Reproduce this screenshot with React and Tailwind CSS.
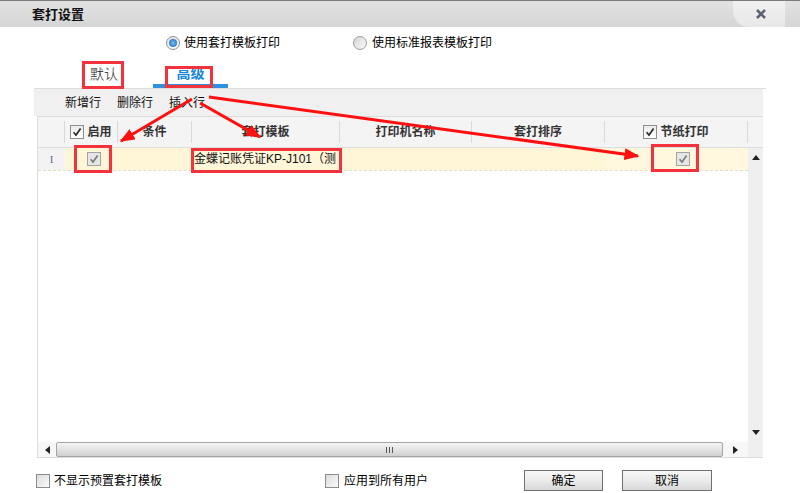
import React from "react";

const Check = ({ color = "#333", size = 10 }) => (
  <svg width={size} height={size} viewBox="0 0 10 10">
    <path d="M1.6 5.2 L4 8 L8.6 1.4" fill="none" stroke={color} strokeWidth="1.7" />
  </svg>
);

function HeaderCheckbox() {
  return (
    <span className="w-[14px] h-[14px] border border-[#8e8e8e] bg-linear-to-b from-[#ececec] to-[#ffffff] flex items-center justify-center shrink-0">
      <Check color="#2d2d2d" />
    </span>
  );
}

function RowCheckbox() {
  return (
    <span className="w-[14px] h-[14px] border border-[#a3a3a3] bg-[#e6e6e6] flex items-center justify-center shrink-0">
      <Check color="#7c7c7c" />
    </span>
  );
}

function EmptyCheckbox() {
  return (
    <span className="w-[14px] h-[14px] border border-[#8c8c8c] bg-linear-to-br from-[#dcdcdc] to-[#fbfbfb] shrink-0" />
  );
}

function HCell({ w, children, sep = true }) {
  return (
    <div className={`flex items-center h-full shrink-0 ${w}`}>
      <div className="flex-1 flex items-center justify-center gap-[3px]">{children}</div>
      {sep && <div className="w-px h-[22px] bg-[#d9d9d9]" />}
    </div>
  );
}

export default function App() {
  return (
    <div className="w-[800px] h-[493px] bg-white relative overflow-hidden text-[12px] leading-none text-black font-['Liberation_Sans','Noto_Sans_CJK_SC',sans-serif]">
      {/* Title bar */}
      <div className="h-[27px] border-t border-[#7a7a7a] bg-linear-to-b from-[#e2e2e2] to-[#d6d6d6] flex items-center">
        <div className="pl-[32px] text-[13px] font-bold text-[#111]">套打设置</div>
        <div className="ml-auto mr-[15px] w-[52px] h-full bg-linear-to-b from-[#f0f0f0] to-[#e8e8e8] rounded-bl-[16px] flex items-center justify-center">
          <svg width="10" height="10" viewBox="0 0 10 10" className="ml-[4px]">
            <path d="M1 1 L9 9 M9 1 L1 9" stroke="#5b6170" strokeWidth="2.6" />
          </svg>
        </div>
      </div>

      {/* Radio row */}
      <div className="h-[31px] flex items-center pl-[166px]">
        <span className="w-[14px] h-[14px] rounded-full border border-[#8d8d8d] bg-linear-to-b from-[#e4e4e4] to-[#fafafa] flex items-center justify-center">
          <span className="w-[8px] h-[8px] rounded-full bg-radial from-[#6fc0f5] to-[#1c64ab]" />
        </span>
        <span className="ml-[4px]">使用套打模板打印</span>
        <span className="ml-[73px] w-[14px] h-[14px] rounded-full border border-[#9a9a9a] bg-linear-to-br from-[#d6d6d6] to-[#fbfbfb]" />
        <span className="ml-[5px]">使用标准报表模板打印</span>
      </div>

      {/* Tabs row */}
      <div className="ml-[34px] w-[732px] h-[31px] border-b border-[#dcdcdc] flex items-end">
        <div className="ml-[56px] h-full flex items-center pt-[2px] text-[14px] font-light text-[#222]">默认</div>
        <div className="ml-[35px] w-[75px] h-full flex flex-col justify-end">
          <div className="flex-1 flex items-center justify-center pt-[4px] text-[14px] font-bold text-[#1a86d8]">高级</div>
          <div className="h-[4px] bg-[#2f90e0]" />
        </div>
      </div>

      {/* Toolbar */}
      <div className="ml-[34px] w-[729px] h-[27px] bg-[#f0f0f0] flex items-center pl-[31px] gap-[16px] text-[12px] text-[#111]">
        <span>新增行</span>
        <span>删除行</span>
        <span>插入行</span>
      </div>

      {/* Grid */}
      <div className="ml-[37px] w-[726px] h-[342px] border-t border-[#dcdcdc] border-l border-b flex flex-col">
        {/* header */}
        <div className="h-[31px] bg-[#f4f4f4] border-b border-[#dedede] flex text-[12px] font-bold text-[#333]">
          <HCell w="w-[27px]" />
          <HCell w="w-[53px]">
            <HeaderCheckbox />
            <span>启用</span>
          </HCell>
          <HCell w="w-[74px]">条件</HCell>
          <HCell w="w-[148px]">套打模板</HCell>
          <HCell w="w-[132px]">打印机名称</HCell>
          <HCell w="w-[133px]">套打排序</HCell>
          <HCell w="w-[143px]">
            <HeaderCheckbox />
            <span>节纸打印</span>
          </HCell>
          <div className="w-[15px]" />
        </div>

        {/* body */}
        <div className="flex-1 flex">
          <div className="w-[710px] flex flex-col">
            <div className="h-[23px] flex border-b border-dashed border-[#e6ddc0]">
              <div className="w-[27px] bg-[#f3f3f3] flex items-center justify-center text-[11px] text-[#6b6b96] font-['Liberation_Serif',serif]">I</div>
              <div className="flex-1 bg-[#fff6d8] flex">
                <div className="w-[53px] flex items-center justify-center pl-[4px]">
                  <RowCheckbox />
                </div>
                <div className="w-[74px]" />
                <div className="w-[148px] flex items-center whitespace-nowrap pl-[2px] text-[12px] text-[#111]">
                  金蝶记账凭证KP-J101（测
                </div>
                <div className="w-[132px]" />
                <div className="w-[133px]" />
                <div className="w-[143px] bg-[#fff8de] flex items-center justify-center pl-[13px]">
                  <RowCheckbox />
                </div>
              </div>
            </div>
            <div className="flex-1" />
          </div>
          {/* vertical scrollbar */}
          <div className="w-[15px] bg-[#efefef] flex flex-col items-center justify-between py-[7px]">
            <svg width="8" height="5" viewBox="0 0 8 5">
              <path d="M0 5 L4 0 L8 5 z" fill="#222" />
            </svg>
            <svg width="8" height="5" viewBox="0 0 8 5">
              <path d="M0 0 L4 5 L8 0 z" fill="#222" />
            </svg>
          </div>
        </div>

        {/* horizontal scrollbar */}
        <div className="h-[15px] flex bg-[#f7f7f7]">
          <div className="w-[18px] flex items-center justify-center">
            <svg width="5" height="8" viewBox="0 0 5 8">
              <path d="M5 0 L0 4 L5 8 z" fill="#222" />
            </svg>
          </div>
          <div className="w-[667px] h-full border border-[#a5a5a5] rounded-[2px] bg-linear-to-b from-[#f4f4f4] via-[#e4e4e4] to-[#cfcfcf] flex items-center justify-center">
            <div className="flex gap-[2px]">
              <span className="w-px h-[6px] bg-[#555]" />
              <span className="w-px h-[6px] bg-[#555]" />
              <span className="w-px h-[6px] bg-[#555]" />
            </div>
          </div>
          <div className="w-[25px] flex items-center justify-center">
            <svg width="5" height="8" viewBox="0 0 5 8">
              <path d="M0 0 L5 4 L0 8 z" fill="#222" />
            </svg>
          </div>
          <div className="w-[15px] bg-[#efefef]" />
        </div>
      </div>

      {/* Bottom row */}
      <div className="h-[35px] flex items-start pt-[12px] pl-[36px]">
        <div className="w-[289px] h-[21px] flex items-center">
          <EmptyCheckbox />
          <span className="ml-[4px]">不显示预置套打模板</span>
        </div>
        <div className="w-[199px] h-[21px] flex items-center">
          <EmptyCheckbox />
          <span className="ml-[5px]">应用到所有用户</span>
        </div>
        <button className="w-[79px] h-[21px] border border-[#707070] bg-linear-to-b from-[#f6f6f6] via-[#ebebeb] to-[#d8d8d8] text-[12px] flex items-center justify-center">
          确定
        </button>
        <button className="ml-[19px] w-[90px] h-[21px] border border-[#707070] bg-linear-to-b from-[#f6f6f6] via-[#ebebeb] to-[#d8d8d8] text-[12px] flex items-center justify-center">
          取消
        </button>
      </div>

      {/* Annotation overlay */}
      <svg className="absolute inset-0 pointer-events-none" width="800" height="493" viewBox="0 0 800 493">
        <defs>
          <marker id="ah" markerWidth="5" markerHeight="4" refX="4.5" refY="2" orient="auto" markerUnits="strokeWidth">
            <path d="M0,0 L5,2 L0,4 z" fill="#ff1010" />
          </marker>
        </defs>
        <g fill="none" stroke="#f2333b" strokeWidth="3">
          <rect x="83.5" y="62.5" width="39" height="25" />
          <rect x="166.5" y="67.5" width="45" height="19" />
          <rect x="75.5" y="146.5" width="35" height="25" />
          <rect x="192.5" y="149.5" width="148" height="22" />
          <rect x="652.5" y="145.5" width="45" height="25" />
        </g>
        <g stroke="#ff1010" strokeWidth="3" fill="none">
          <line x1="192" y1="99" x2="121" y2="141" markerEnd="url(#ah)" />
          <line x1="200" y1="103" x2="260" y2="137" markerEnd="url(#ah)" />
          <line x1="209" y1="97" x2="638" y2="156" markerEnd="url(#ah)" />
        </g>
      </svg>
    </div>
  );
}
